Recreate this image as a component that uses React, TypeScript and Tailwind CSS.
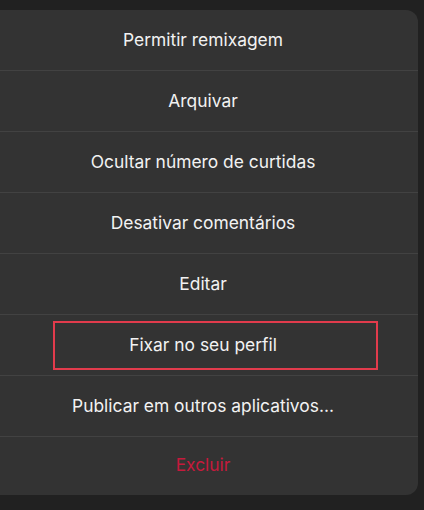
const ITEMS = [
  'Permitir remixagem',
  'Arquivar',
  'Ocultar número de curtidas',
  'Desativar comentários',
  'Editar',
  'Fixar no seu perfil',
  'Publicar em outros aplicativos...',
];

export default function App() {
  return (
    <div className="h-[510px] w-[424px] overflow-hidden bg-[#212121] pt-[10px] font-['Inter',sans-serif]">
      <div className="ml-[-12px] w-[430px] overflow-hidden rounded-[12px] bg-[#333333]">
        {ITEMS.map((label, i) => (
          <div
            key={label}
            className="flex h-[61px] items-center justify-center border-b border-[#424242] text-[17.4px] text-[#f2f2f2]"
          >
            {i === 5 ? (
              <div className="ml-[25px] flex h-[49px] w-[325px] items-center justify-center border-2 border-[#e23b4c] pr-[25px]">
                {label}
              </div>
            ) : (
              label
            )}
          </div>
        ))}
        <div className="flex h-[58px] items-center justify-center pb-[1px] text-[17.4px] text-[#c51a3c]">
          Excluir
        </div>
      </div>
    </div>
  );
}
